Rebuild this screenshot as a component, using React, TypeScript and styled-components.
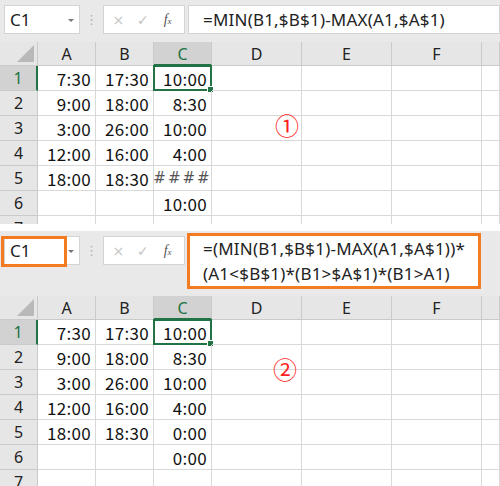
import React from "react";
import styled, { createGlobalStyle, css } from "styled-components";

const GlobalStyle = createGlobalStyle`
  html, body {
    margin: 0;
    padding: 0;
    background: #ffffff;
  }
  body {
    font-family: "Noto Sans CJK JP", "Noto Sans", sans-serif;
    color: #000;
  }
`;

const colors = {
  toolbar: "#e9e9e9",
  header: "#e6e6e6",
  headerActive: "#d2d2d2",
  headerLine: "#cacaca",
  grid: "#d9d9d9",
  green: "#217346",
  orange: "#f47b20",
  box: "#d4d4d4",
};

type Row = [string, string, string];

const topRows: Row[] = [
  ["7:30", "17:30", "10:00"],
  ["9:00", "18:00", "8:30"],
  ["3:00", "26:00", "10:00"],
  ["12:00", "16:00", "4:00"],
  ["18:00", "18:30", "####"],
  ["", "", "10:00"],
  ["", "", ""],
];

const bottomRows: Row[] = [
  ["7:30", "17:30", "10:00"],
  ["9:00", "18:00", "8:30"],
  ["3:00", "26:00", "10:00"],
  ["12:00", "16:00", "4:00"],
  ["18:00", "18:30", "0:00"],
  ["", "", "0:00"],
  ["", "", ""],
];

const columns = ["A", "B", "C", "D", "E", "F", ""];

interface PanelProps {
  formula: string[];
  rows: Row[];
  highlight?: boolean;
  marker: string;
  markerTop: number;
  markerLeft: number;
  height?: number;
}

const SheetPanel = (props: PanelProps) => {
  return (
    <Panel $height={props.height}>
      <Toolbar $tall={props.formula.length > 1}>
        <NameBox>
          C1
          <Caret />
          {props.highlight && <NameHighlight />}
        </NameBox>
        <Dots>⋮</Dots>
        <ButtonBox>
          <Glyph>×</Glyph>
          <Glyph>✓</Glyph>
          <Fx>
            f<small>x</small>
          </Fx>
        </ButtonBox>
        <FormulaBox $highlight={props.highlight} $lines={props.formula.length}>
          {props.formula.map(line => (
            <FormulaLine key={line}>{line}</FormulaLine>
          ))}
        </FormulaBox>
      </Toolbar>
      <Grid>
        <Corner />
        {columns.map((c, i) => (
          <ColHeader key={i} $active={c === "C"}>
            {c}
          </ColHeader>
        ))}
        {props.rows.map((row, r) => (
          <React.Fragment key={r}>
            <RowHeader $active={r === 0}>{r + 1}</RowHeader>
            {row.map((v, c) => (
              <Cell key={c} $hash={v === "####"}>
                {v}
                {r === 0 && c === 2 && (
                  <Selection>
                    <Handle />
                  </Selection>
                )}
              </Cell>
            ))}
            <Cell />
            <Cell />
            <Cell />
            <Cell />
          </React.Fragment>
        ))}
      </Grid>
      <Marker style={{ top: props.markerTop, left: props.markerLeft }}>
        {props.marker}
      </Marker>
    </Panel>
  );
};

export default function App() {
  return (
    <>
      <GlobalStyle />
      <Page>
        <SheetPanel
          formula={["=MIN(B1,$B$1)-MAX(A1,$A$1)"]}
          rows={topRows}
          marker="①"
          markerTop={112}
          markerLeft={275}
          height={224}
        />
        <SheetPanel
          formula={[
            "=(MIN(B1,$B$1)-MAX(A1,$A$1))*",
            "(A1<$B$1)*(B1>$A$1)*(B1>A1)",
          ]}
          rows={bottomRows}
          highlight
          marker="②"
          markerTop={125}
          markerLeft={273}
        />
      </Page>
    </>
  );
}

const Page = styled.div`
  width: 500px;
  height: 486px;
  display: flex;
  flex-direction: column;
  gap: 7px;
  overflow: hidden;
`;

const Panel = styled.div<{ $height?: number }>`
  position: relative;
  overflow: hidden;
  flex: ${p => (p.$height ? `0 0 ${p.$height}px` : "1")};
  background: #fff;
`;

const Toolbar = styled.div<{ $tall?: boolean }>`
  display: flex;
  align-items: flex-start;
  background: ${colors.toolbar};
  padding: ${p => (p.$tall ? "5px 0 10px 4px" : "5px 0 8px 4px")};
  height: ${p => (p.$tall ? "50px" : "29px")};
`;

const boxBase = css`
  box-sizing: border-box;
  height: 29px;
  background: #fff;
  border: 1px solid ${colors.box};
`;

const NameBox = styled.div`
  ${boxBase};
  position: relative;
  width: 76px;
  display: flex;
  align-items: center;
  padding-left: 5px;
  font-family: "Noto Sans", "Open Sans", sans-serif;
  font-size: 17px;
  color: #222;
`;

const Caret = styled.span`
  position: absolute;
  right: 5px;
  top: 13px;
  border-left: 3px solid transparent;
  border-right: 3px solid transparent;
  border-top: 3px solid #777;
`;

const NameHighlight = styled.span`
  position: absolute;
  left: -4px;
  top: -1px;
  width: 66px;
  height: 31px;
  box-sizing: border-box;
  border: 3px solid ${colors.orange};
`;

const Dots = styled.div`
  width: 23px;
  height: 29px;
  display: flex;
  align-items: center;
  justify-content: center;
  color: #b0b0b0;
  font-size: 13px;
  font-family: "DejaVu Sans", sans-serif;
`;

const ButtonBox = styled.div`
  ${boxBase};
  width: 82px;
  display: flex;
  align-items: center;
  justify-content: space-around;
  padding: 0 4px 0 2px;
`;

const Glyph = styled.span`
  font-family: "DejaVu Sans", sans-serif;
  font-size: 14px;
  color: #c4c4c4;
  width: 20px;
  text-align: center;
`;

const Fx = styled.span`
  font-family: "Liberation Serif", serif;
  font-style: italic;
  font-size: 14px;
  color: #555;
  width: 20px;
  text-align: center;
  small {
    font-size: 9px;
  }
`;

const FormulaBox = styled.div<{ $highlight?: boolean; $lines: number }>`
  ${boxBase};
  height: ${p => (p.$lines > 1 ? "50px" : "29px")};
  margin-left: 3px;
  flex: ${p => (p.$highlight ? "0 0 288px" : "1")};
  padding: ${p => (p.$lines > 1 ? "0 0 0 13px" : "0 0 0 14px")};
  display: flex;
  flex-direction: column;
  justify-content: center;
  font-family: "Noto Sans", "Open Sans", sans-serif;
  font-size: 17px;
  letter-spacing: 0.2px;
  color: #222;
  ${p =>
    p.$highlight &&
    css`
      border: none;
      outline: 3px solid ${colors.orange};
      margin-left: 5px;
    `}
`;

const FormulaLine = styled.div`
  line-height: 25px;
  white-space: nowrap;
`;

const Grid = styled.div`
  display: grid;
  grid-template-columns: 38px 58px 58px 58px 90px 90px 90px 1fr;
  grid-template-rows: 24px;
  grid-auto-rows: 25px;
`;

const Corner = styled.div`
  position: relative;
  background: ${colors.header};
  border-right: 1px solid ${colors.headerLine};
  border-bottom: 1px solid ${colors.headerLine};
  box-sizing: border-box;
  &::after {
    content: "";
    position: absolute;
    right: 3px;
    bottom: 3px;
    border-left: 17px solid transparent;
    border-bottom: 17px solid #b9b9b9;
  }
`;

const ColHeader = styled.div<{ $active?: boolean }>`
  box-sizing: border-box;
  background: ${p => (p.$active ? colors.headerActive : colors.header)};
  color: ${p => (p.$active ? colors.green : "#222")};
  border-right: 1px solid ${colors.headerLine};
  border-bottom: ${p =>
    p.$active ? `2px solid ${colors.green}` : `1px solid ${colors.headerLine}`};
  display: flex;
  align-items: center;
  justify-content: center;
  font-family: "Noto Sans", "Open Sans", sans-serif;
  font-size: 16px;
  padding-top: ${p => (p.$active ? "1px" : "0")};
`;

const RowHeader = styled.div<{ $active?: boolean }>`
  box-sizing: border-box;
  background: ${p => (p.$active ? colors.headerActive : colors.header)};
  color: ${p => (p.$active ? colors.green : "#222")};
  border-right: ${p =>
    p.$active ? `2px solid ${colors.green}` : `1px solid ${colors.headerLine}`};
  border-bottom: 1px solid ${colors.headerLine};
  display: flex;
  align-items: center;
  justify-content: center;
  font-family: "Noto Sans", "Open Sans", sans-serif;
  font-size: 16px;
`;

const Cell = styled.div<{ $hash?: boolean }>`
  position: relative;
  box-sizing: border-box;
  border-right: 1px solid ${colors.grid};
  border-bottom: 1px solid ${colors.grid};
  display: flex;
  align-items: center;
  justify-content: flex-end;
  padding-right: 4px;
  font-size: 17px;
  color: ${p => (p.$hash ? "#555" : "#111")};
  letter-spacing: ${p => (p.$hash ? "2px" : "0.3px")};
  font-family: ${p =>
    p.$hash ? `"DejaVu Sans", sans-serif` : `"Noto Sans CJK JP", sans-serif`};
  ${p =>
    p.$hash &&
    css`
      font-size: 15px;
      justify-content: center;
      padding-right: 0;
    `}
`;

const Selection = styled.span`
  position: absolute;
  left: -1px;
  top: -1px;
  right: -1px;
  bottom: -1px;
  border: 2px solid ${colors.green};
  pointer-events: none;
`;

const Handle = styled.span`
  position: absolute;
  right: -4px;
  bottom: -4px;
  width: 5px;
  height: 5px;
  background: ${colors.green};
  border: 1px solid #fff;
`;

const Marker = styled.span`
  position: absolute;
  font-family: "Noto Sans CJK JP", sans-serif;
  font-size: 24px;
  line-height: 26px;
  color: #f22;
`;
